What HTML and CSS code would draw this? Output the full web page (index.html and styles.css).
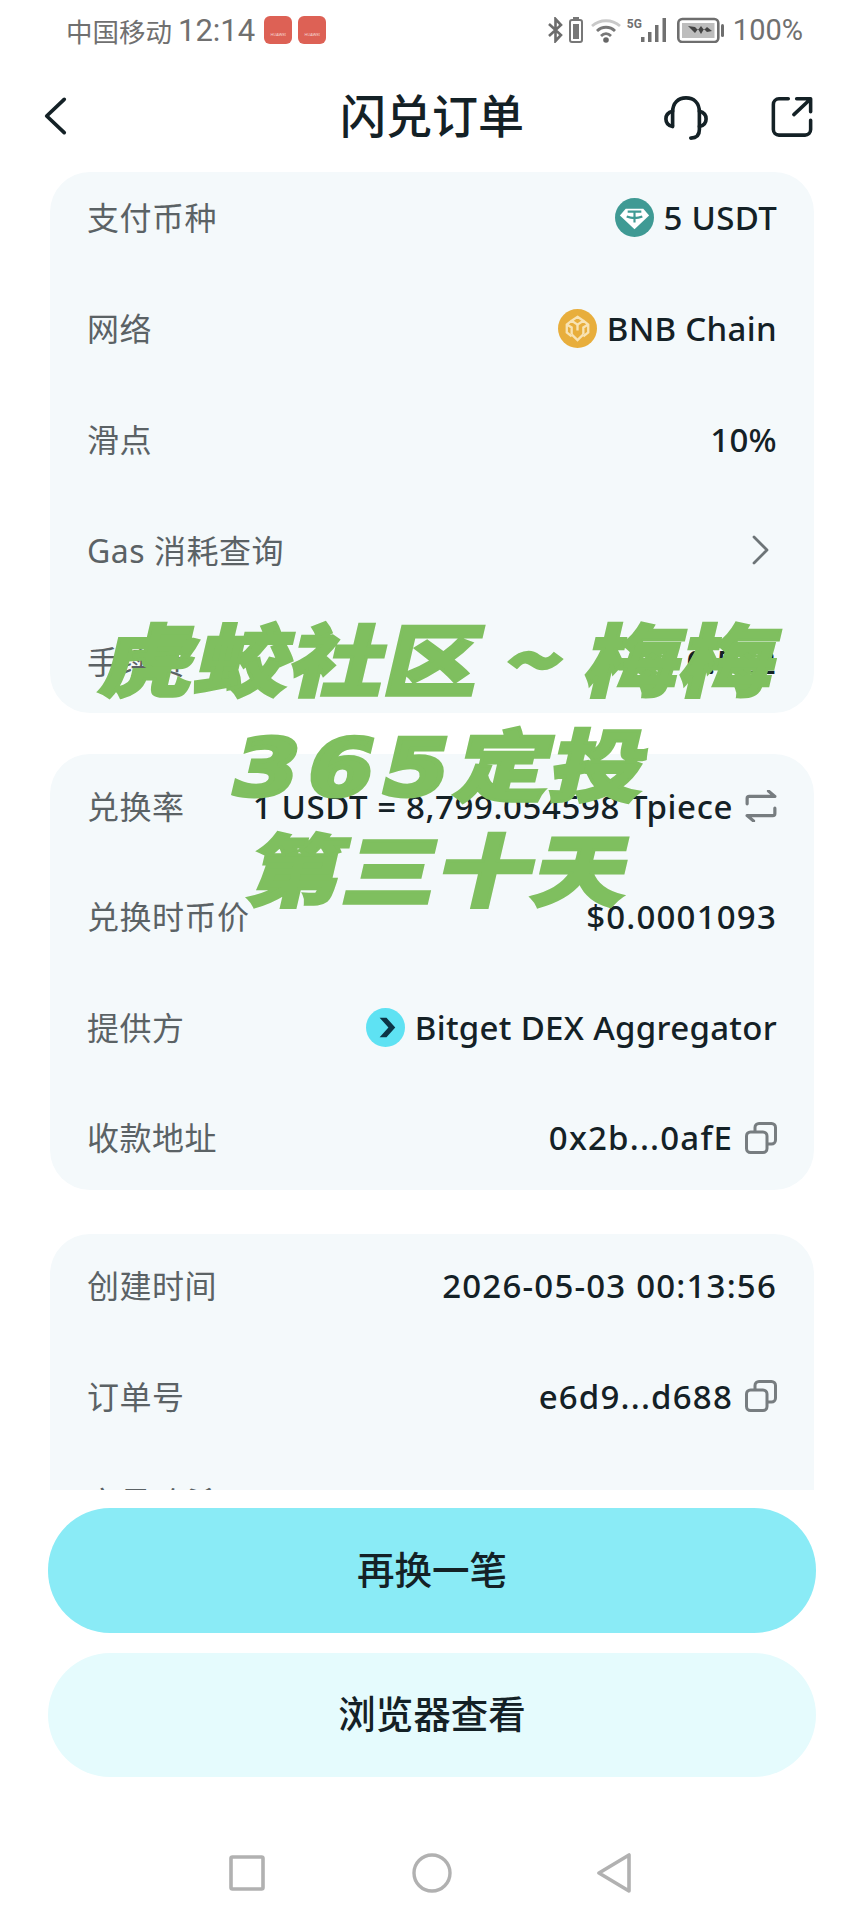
FILE: index.html
```html
<!DOCTYPE html>
<html>
<head>
  <title>闪兑订单</title>
  <link rel="stylesheet" href="styles.css">
</head>
<body>
  <div class="phone">
    <div class="status-bar">
      <div class="status-left">
        <span class="carrier">中国移动</span>
        <span class="clock">12:14</span>
        <span class="app-badge">HUAWEI</span>
        <span class="app-badge">HUAWEI</span>
      </div>
      <div class="status-right">
        <svg class="st-bt" viewBox="0 0 17 26" fill="none" stroke="#6c6c6c" stroke-width="2.600"><path d="M2 7l12 11-5.500 6V2L14 8 2 19"/></svg>
        <svg class="st-mini" viewBox="0 0 14 26"><rect x="4" y="0" width="6" height="2" fill="#777"/><rect x="1" y="3" width="12" height="22" rx="2" fill="none" stroke="#777" stroke-width="2"/><rect x="4" y="7" width="6" height="15" fill="#777"/></svg>
        <svg class="st-wifi" viewBox="0 0 30 26" fill="none" stroke-width="2.800"><path d="M1 9c8-7 20-7 28 0" stroke="#c9c9c9"/><path d="M6 14c5-5 13-5 18 0" stroke="#777"/><path d="M10 19c3-3 7-3 10 0" stroke="#777"/><circle cx="15" cy="23" r="2.800" fill="#666" stroke="none"/></svg>
        <span class="st-5g">5G</span>
        <svg class="st-signal" viewBox="0 0 26 26" fill="#707070"><rect x="0" y="20" width="3.500" height="5"/><rect x="7" y="15" width="3.500" height="10"/><rect x="14" y="8" width="3.500" height="17"/><rect x="21.500" y="1" width="3.500" height="24"/></svg>
        <svg class="st-battery" viewBox="0 0 47 26"><rect x="1.300" y="2" width="40" height="23" rx="4" fill="none" stroke="#6e6e6e" stroke-width="2.600"/><rect x="5" y="6" width="32.500" height="15" fill="#bdbdbd"/><path d="M11 9l7 1 3 3 3-4 3 4 3-3 5 4-5 1-3-3-3 5-3-5-3 4z" fill="#444"/><rect x="44" y="7" width="3" height="13" rx="1.500" fill="#6e6e6e"/></svg>
        <span class="st-percent">100%</span>
      </div>
    </div>

    <div class="top-bar">
      <svg class="ic-back" viewBox="0 0 26 42" fill="none" stroke="#142126" stroke-width="4" stroke-linecap="round" stroke-linejoin="round"><path d="M23 3L4 21l19 18"/></svg>
      <h1 class="title">闪兑订单</h1>
      <div class="top-actions">
        <svg class="ic-service" viewBox="0 0 46 46" fill="none" stroke="#142126" stroke-width="3.800" stroke-linecap="round"><path d="M9 31V17C9 7 15 2 23 2s14 5 14 15v18c0 6-3 9-9 9"/><path d="M9 16c-4 1-7 4-7 8s3 7 7 8"/><path d="M37 16c4 1 7 4 7 8s-3 7-7 8"/></svg>
        <svg class="ic-open" viewBox="0 0 44 44" fill="none" stroke="#142126" stroke-width="3.800" stroke-linecap="round" stroke-linejoin="round"><path d="M18 3H8a6 6 0 0 0-6 6v27a6 6 0 0 0 6 6h28a6 6 0 0 0 6-6V26"/><path d="M24 20L41 4M27 3h15v14"/></svg>
      </div>
    </div>

    <div class="scroll">
      <section class="card card-first">
        <div class="row">
          <span class="label">支付币种</span>
          <span class="value">
            <svg class="coin" viewBox="0 0 40 40"><circle cx="20" cy="20" r="20" fill="#3f9a94"/><path d="M11 11h18l6 7-15 14L5 18z" fill="#fff"/><path d="M13 14h14M20 14v11M12 19c5 2 11 2 16 0" fill="none" stroke="#3f9a94" stroke-width="2.200"/></svg>
            <span>5 USDT</span>
          </span>
        </div>
        <div class="row">
          <span class="label">网络</span>
          <span class="value">
            <svg class="coin" viewBox="0 0 40 40"><circle cx="20" cy="20" r="20" fill="#e8ae3c"/><g fill="none" stroke="#f8e3b4" stroke-width="2.400"><path d="M20 8l6 4-6 4-6-4zM9 16l5 3v7M31 16l-5 3v7M14 12l-5 4v8l5 4M26 12l5 4v8l-5 4"/><path d="M20 16v6M14 26l6 6 6-6"/></g></svg>
            <span>BNB Chain</span>
          </span>
        </div>
        <div class="row">
          <span class="label">滑点</span>
          <span class="value">10%</span>
        </div>
        <div class="row">
          <span class="label">Gas 消耗查询</span>
          <svg class="ic-next" viewBox="0 0 18 30" fill="none" stroke="#6d7477" stroke-width="2.800" stroke-linecap="round" stroke-linejoin="round"><path d="M3 2l13 13L3 28"/></svg>
        </div>
        <div class="row">
          <span class="label">手续费</span>
          <span class="value num">0.522</span>
        </div>
      </section>

      <section class="card">
        <div class="row">
          <span class="label">兑换率</span>
          <span class="value">
            <span class="rate">1 USDT = 8,799.054598 Tpiece</span>
            <svg class="ic-small" viewBox="0 0 30 30" fill="none" stroke="#777d80" stroke-width="3" stroke-linecap="round" stroke-linejoin="round"><path d="M2 13V8q0-2 2-2h24M22 1l6 5M28 17v5q0 2-2 2H2M8 29l-6-5"/></svg>
          </span>
        </div>
        <div class="row">
          <span class="label">兑换时币价</span>
          <span class="value num">$0.0001093</span>
        </div>
        <div class="row">
          <span class="label">提供方</span>
          <span class="value">
            <svg class="coin" viewBox="0 0 40 40"><circle cx="20" cy="20" r="20" fill="#5ee2f3"/><path d="M14 10h7l9 10-9 10h-7l9-10z" fill="#0c3446"/></svg>
            <span>Bitget DEX Aggregator</span>
          </span>
        </div>
        <div class="row">
          <span class="label">收款地址</span>
          <span class="value num">
            <span>0x2b...0afE</span>
            <svg class="ic-small" viewBox="0 0 32 32" fill="none" stroke="#777d80" stroke-width="3" stroke-linejoin="round"><rect x="1.500" y="10" width="20.500" height="20.500" rx="4"/><path d="M10 10V5.500a4 4 0 0 1 4-4h12.500a4 4 0 0 1 4 4V18a4 4 0 0 1-4 4H22"/></svg>
          </span>
        </div>
      </section>

      <section class="card">
        <div class="row">
          <span class="label">创建时间</span>
          <span class="value num">2026-05-03 00:13:56</span>
        </div>
        <div class="row">
          <span class="label">订单号</span>
          <span class="value num">
            <span>e6d9...d688</span>
            <svg class="ic-small" viewBox="0 0 32 32" fill="none" stroke="#777d80" stroke-width="3" stroke-linejoin="round"><rect x="1.500" y="10" width="20.500" height="20.500" rx="4"/><path d="M10 10V5.500a4 4 0 0 1 4-4h12.500a4 4 0 0 1 4 4V18a4 4 0 0 1-4 4H22"/></svg>
          </span>
        </div>
        <div class="row row-cut">
          <span class="label">交易哈希</span>
        </div>
      </section>
    </div>

    <div class="actions">
      <button class="btn btn-main">再换一笔</button>
      <button class="btn btn-light">浏览器查看</button>
    </div>

    <div class="nav-bar">
      <svg class="nav-square" viewBox="0 0 36 36" fill="none" stroke="#b1b1b1" stroke-width="3.600" stroke-linejoin="round"><rect x="2" y="2" width="32" height="32" rx="1.500"/></svg>
      <svg class="nav-circle" viewBox="0 0 40 40" fill="none" stroke="#b1b1b1" stroke-width="3.400"><circle cx="20" cy="20" r="18"/></svg>
      <svg class="nav-back" viewBox="0 0 36 40" fill="none" stroke="#b1b1b1" stroke-width="3.600" stroke-linejoin="round"><path d="M33 2v36L3 20z"/></svg>
    </div>

    <div class="watermark">
      <div class="wm-line">虎蛟社区 ~ 梅梅</div>
      <div class="wm-line"><span class="wm-digits">365</span>定投</div>
      <div class="wm-line">第三十天</div>
    </div>
  </div>
</body>
</html>
```

FILE: styles.css
```css
/* order detail screen */
* {
  box-sizing: border-box;
}

body {
  margin: 0;
  background: #fff;
  font-family: "Noto Sans", "Noto Sans CJK SC", sans-serif;
}

.phone {
  position: relative;
  width: 864px;
  height: 1920px;
  overflow: hidden;
  display: flex;
  flex-direction: column;
}

/* status bar */
.status-bar {
  height: 60px;
  padding: 0 61px 0 66px;
  display: flex;
  align-items: center;
  justify-content: space-between;
  color: #707070;
}

.status-left {
  display: flex;
  align-items: center;
}

.carrier {
  font-family: "Noto Sans CJK SC", sans-serif;
  font-size: 26.500px;
}

.clock {
  margin-left: 6px;
  font-family: Roboto, sans-serif;
  font-size: 31px;
}

.app-badge {
  width: 28px;
  height: 28px;
  margin-left: 6px;
  border-radius: 6px;
  background: #dd6155;
  color: #f6d5d0;
  font-size: 4px;
  text-align: center;
  line-height: 38px;
  overflow: hidden;
}

.clock + .app-badge {
  margin-left: 9px;
}

.status-right {
  display: flex;
  align-items: center;
}

.st-bt {
  width: 17px;
  height: 26px;
}

.st-mini {
  width: 14px;
  height: 26px;
  margin-left: 5px;
}

.st-wifi {
  width: 30px;
  height: 26px;
  margin-left: 8px;
}

.st-5g {
  width: 14px;
  margin: -12px 0 0 6px;
  font-family: Roboto, sans-serif;
  font-size: 12px;
  font-weight: 700;
}

.st-signal {
  width: 26px;
  height: 26px;
}

.st-battery {
  width: 47px;
  height: 26px;
  margin-left: 10px;
}

.st-percent {
  margin-left: 9px;
  font-family: Roboto, sans-serif;
  font-size: 29px;
}

/* title row */
.top-bar {
  height: 112px;
  padding: 0 51px;
  display: grid;
  grid-template-columns: 1fr auto 1fr;
  align-items: center;
}

.ic-back {
  width: 24px;
  height: 40px;
  margin-left: -8px;
}

.title {
  margin: 0 0 6px;
  font-family: "Noto Sans CJK SC", sans-serif;
  font-size: 46px;
  font-weight: 500;
  color: #142126;
}

.top-actions {
  display: flex;
  align-items: center;
  justify-content: flex-end;
}

.ic-service {
  width: 44px;
  height: 44px;
  margin-top: 4px;
}

.ic-open {
  width: 42px;
  height: 41px;
  margin-left: 63px;
}

/* scrolling list */
.scroll {
  height: 1318px;
  padding: 0 50px;
  overflow: hidden;
  flex: none;
}

.card {
  margin-bottom: 44px;
  padding: 0 37px;
  background: #f4f9fb;
  border-radius: 40px;
  display: flex;
  flex-direction: column;
  gap: 6.500px;
}

.card-first {
  margin-bottom: 41px;
  gap: 7px;
}

.row {
  height: 104px;
  display: flex;
  align-items: center;
  justify-content: space-between;
}

.card-first .row:first-child {
  height: 90px;
  margin-bottom: 7px;
}

.row-cut {
  height: 96px;
}

.label {
  margin-bottom: 3px;
  font-size: 32px;
  letter-spacing: 0.500px;
  color: #5b6265;
}

.value {
  display: flex;
  align-items: center;
  font-size: 33px;
  font-weight: 500;
  letter-spacing: 0.300px;
  color: #142126;
  white-space: nowrap;
}

.num {
  letter-spacing: 1.200px;
}

.rate {
  letter-spacing: 0.600px;
}

.coin {
  width: 39px;
  height: 39px;
  margin-right: 10px;
}

.ic-small {
  width: 32px;
  height: 32px;
  margin-left: 12px;
}

.ic-next {
  width: 18px;
  height: 30px;
  margin-right: 8px;
}

/* buttons */
.actions {
  padding: 18px 48px 0;
  display: flex;
  flex-direction: column;
  gap: 20px;
}

.btn {
  height: 124.500px;
  padding: 0 0 6px;
  border: none;
  border-radius: 62px;
  font-family: "Noto Sans CJK SC", sans-serif;
  font-size: 37.500px;
  font-weight: 500;
  color: #142126;
}

.btn-main {
  background: #8aebf6;
}

.btn-light {
  background: #e5fbfd;
}

/* android nav */
.nav-bar {
  margin-top: 76px;
  padding-right: 3px;
  display: flex;
  justify-content: center;
  align-items: center;
  gap: 147px;
}

.nav-square {
  width: 36px;
  height: 36px;
}

.nav-circle {
  width: 40px;
  height: 40px;
}

.nav-back {
  width: 36px;
  height: 40px;
  margin-left: -3px;
}

/* green caption laid over the screen */
.watermark {
  position: absolute;
  top: 604px;
  left: 0;
  width: 864px;
  padding-left: 20px;
  display: flex;
  flex-direction: column;
  align-items: center;
  font-family: "Noto Sans CJK SC", sans-serif;
  font-size: 78px;
  font-weight: 900;
  line-height: 105px;
  letter-spacing: 1px;
  color: #7fbf5f;
  white-space: nowrap;
  -webkit-text-stroke: 3px #7fbf5f;
}

.wm-line {
  height: 105px;
  word-spacing: 1px;
  transform: scaleX(1.2) skewX(-11deg);
}

.wm-digits {
  display: inline-block;
  font-family: "DejaVu Sans", sans-serif;
  font-size: 78px;
  font-weight: 700;
  letter-spacing: 8px;
  -webkit-text-stroke: 5px #7fbf5f;
}
```
